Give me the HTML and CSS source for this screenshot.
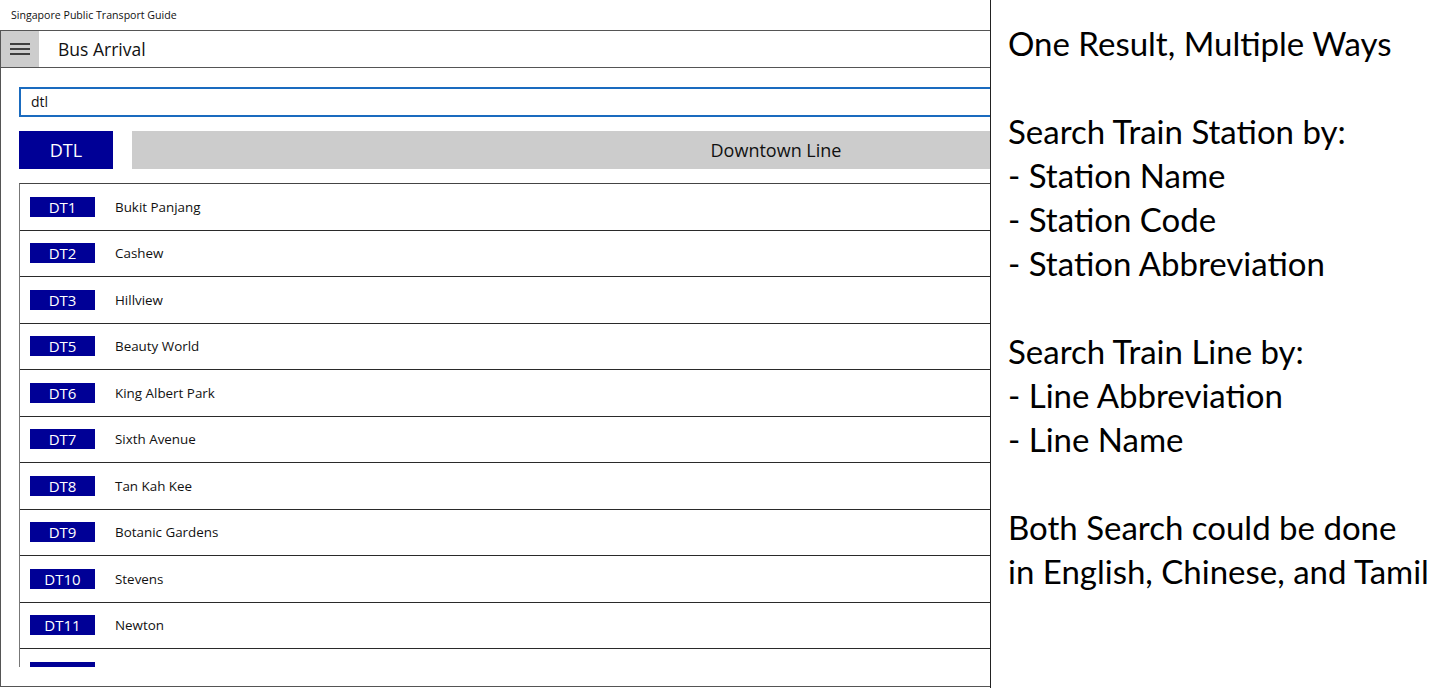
FILE: index.html
```html
<!DOCTYPE html>
<html lang="en">
<head>
<meta charset="utf-8">
<title>Singapore Public Transport Guide</title>
<link rel="stylesheet" href="styles.css">
</head>
<body>
<div class="page">
  <div class="window">
    <div class="titlebar">Singapore Public Transport Guide</div>
    <div class="app">
      <div class="nav">
        <button class="hamburger" aria-label="Menu">
          <svg width="20" height="12" viewBox="0 0 20 12"><path d="M0 1h20M0 6h20M0 11h20" stroke="#111" stroke-width="1.6" fill="none"/></svg>
        </button>
        <div class="nav-title">Bus Arrival</div>
      </div>
      <div class="content">
        <div class="search">dtl</div>
        <div class="line-row">
          <div class="line-code">DTL</div>
          <div class="line-name">Downtown Line</div>
        </div>
        <div class="list">
          <div class="row"><span class="badge">DT1</span><span class="name">Bukit Panjang</span></div>
          <div class="row"><span class="badge">DT2</span><span class="name">Cashew</span></div>
          <div class="row"><span class="badge">DT3</span><span class="name">Hillview</span></div>
          <div class="row"><span class="badge">DT5</span><span class="name">Beauty World</span></div>
          <div class="row"><span class="badge">DT6</span><span class="name">King Albert Park</span></div>
          <div class="row"><span class="badge">DT7</span><span class="name">Sixth Avenue</span></div>
          <div class="row"><span class="badge">DT8</span><span class="name">Tan Kah Kee</span></div>
          <div class="row"><span class="badge">DT9</span><span class="name">Botanic Gardens</span></div>
          <div class="row"><span class="badge">DT10</span><span class="name">Stevens</span></div>
          <div class="row"><span class="badge">DT11</span><span class="name">Newton</span></div>
          <div class="row"><span class="badge">DT12</span><span class="name">Little India</span></div>
        </div>
      </div>
    </div>
  </div>
  <div class="notes">
    <p>One Result, Multiple Ways</p>
    <p class="gap">Search Train Station by:</p>
    <p>- Station Name</p>
    <p>- Station Code</p>
    <p>- Station Abbreviation</p>
    <p class="gap">Search Train Line by:</p>
    <p>- Line Abbreviation</p>
    <p>- Line Name</p>
    <p class="gap">Both Search could be done</p>
    <p>in English, Chinese, and Tamil</p>
  </div>
</div>
</body>
</html>
```

FILE: styles.css
```css
* { box-sizing: border-box; }
html, body { margin: 0; padding: 0; background: #fff; }
body { font-family: "Open Sans", "Noto Sans", sans-serif; color: #111; }

.page {
  display: flex;
  width: 1440px;
  height: 688px;
  overflow: hidden;
}

.window {
  width: 991px;
  flex: none;
  height: 688px;
  border-right: 1px solid #222;
  display: flex;
  flex-direction: column;
  overflow: hidden;
}

.titlebar {
  height: 30px;
  flex: none;
  font-size: 10.6px;
  line-height: 30px;
  padding-left: 11px;
  color: #111;
}

.app {
  flex: 1;
  display: flex;
  flex-direction: column;
  border-top: 1px solid #555;
  border-left: 1px solid #555;
  border-bottom: 1px solid #555;
  margin-bottom: 1px;
  overflow: hidden;
}

.nav {
  height: 37px;
  flex: none;
  display: flex;
  align-items: center;
  border-bottom: 1px solid #555;
}

.hamburger {
  width: 38px;
  height: 36px;
  border: 0;
  margin: 0;
  padding: 0;
  background: #cdcdcd;
  display: flex;
  align-items: center;
  justify-content: center;
}

.nav-title {
  margin-left: 19px;
  font-size: 17.5px;
}

.content {
  flex: 1;
  display: flex;
  flex-direction: column;
  padding: 19px 0 19px 18px;
  min-height: 0;
}

.search {
  width: 1100px;
  height: 30px;
  flex: none;
  border: 2px solid #1a6bbf;
  font-size: 14px;
  line-height: 26px;
  padding-left: 10px;
}

.line-row {
  display: flex;
  margin-top: 14px;
  height: 38px;
  flex: none;
  gap: 19px;
}

.line-code {
  width: 94px;
  flex: none;
  background: #000096;
  color: #fff;
  font-size: 18px;
  display: flex;
  align-items: center;
  justify-content: center;
}

.line-name {
  width: 1288px;
  flex: none;
  background: #cccccc;
  font-size: 18px;
  display: flex;
  align-items: center;
  justify-content: center;
}

.list {
  margin-top: 14px;
  flex: 1;
  min-height: 0;
  overflow: hidden;
  border-left: 1px solid #777;
  border-top: 1px solid #444;
}

.row {
  height: 46.5px;
  display: flex;
  align-items: center;
  border-bottom: 1.5px solid #2a2a2a;
  padding-left: 10px;
}

.badge {
  width: 65px;
  height: 20px;
  background: #000096;
  color: #fff;
  font-size: 15px;
  line-height: 20px;
  text-align: center;
  flex: none;
}

.name {
  margin-left: 20px;
  font-size: 13.4px;
}

.notes {
  flex: 1;
  padding: 21px 0 0 17px;
  font-family: "Lato", "Noto Sans", sans-serif;
  font-size: 33px;
  line-height: 44px;
  color: #000;
  white-space: nowrap;
}

.notes p { margin: 0; }
.notes p.gap { margin-top: 44px; }
```
